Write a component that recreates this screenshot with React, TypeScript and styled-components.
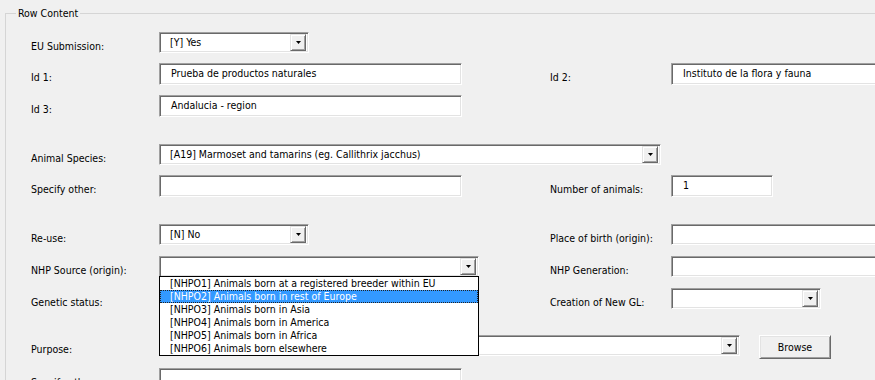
import React from 'react';
import styled, { createGlobalStyle } from 'styled-components';

const GlobalStyle = createGlobalStyle`
  html, body {
    margin: 0;
    padding: 0;
    overflow: hidden;
    background: #f0f0f0;
  }
  body {
    width: 875px;
    height: 380px;
    font-family: "DejaVu Sans Condensed", "Liberation Sans", sans-serif;
    font-size: 10.5px;
    color: #000;
  }
`;

const GroupBox = styled.fieldset`
  margin: 7px 0 0 5px;
  padding: 0;
  width: 960px;
  height: 440px;
  min-width: 0;
  box-sizing: border-box;
  border: 1px solid #d5d5d5;
`;

const Legend = styled.legend`
  margin-left: 10px;
  padding: 0 2px;
  line-height: 13px;
`;

const Form = styled.div`
  padding: 12px 0 0 25px;
`;

const Row = styled.div<{ $height: number }>`
  display: grid;
  grid-template-columns: 128px 391px 121px 1fr;
  align-items: start;
  height: ${({ $height }) => $height}px;
`;

const Label = styled.div`
  padding-top: 8px;
  line-height: 13px;
  white-space: nowrap;
`;

const Cell = styled.div<{ $span?: number }>`
  grid-column: span ${({ $span = 1 }) => $span};
  display: flex;
  align-items: flex-start;
  gap: 19px;

  & > * {
    flex-shrink: 0;
  }
`;

const sunken = `
  box-sizing: border-box;
  background: #fff;
  border-top: 1px solid #a0a0a0;
  border-left: 1px solid #a0a0a0;
  border-right: 1px solid #fff;
  border-bottom: 1px solid #fff;
  box-shadow: inset 1px 1px 0 #696969, inset -1px -1px 0 #e3e3e3;
`;

const TextBox = styled.div<{ $width: number }>`
  ${sunken}
  width: ${({ $width }) => $width}px;
  height: 22px;
  padding: 0 0 0 11px;
  line-height: 19px;
  white-space: nowrap;
  overflow: hidden;
`;

const ComboBox = styled.div<{ $width: number }>`
  ${sunken}
  position: relative;
  display: flex;
  align-items: center;
  width: ${({ $width }) => $width}px;
  height: 21px;
  padding: 2px 2px 2px 10px;
  white-space: nowrap;
`;

const ComboText = styled.span`
  flex: 1;
  line-height: 15px;
  overflow: hidden;
`;

const ArrowButton = styled.div`
  box-sizing: border-box;
  width: 16px;
  height: 17px;
  display: flex;
  align-items: center;
  justify-content: center;
  background: #f0f0f0;
  border-top: 1px solid #e3e3e3;
  border-left: 1px solid #e3e3e3;
  border-right: 1px solid #696969;
  border-bottom: 1px solid #696969;
  box-shadow: inset 1px 1px 0 #fff, inset -1px -1px 0 #a0a0a0;
`;

const DropList = styled.ul`
  position: absolute;
  top: 100%;
  left: -1px;
  z-index: 10;
  box-sizing: border-box;
  width: 320px;
  margin: 0;
  padding: 0;
  list-style: none;
  background: #fff;
  border: 1px solid #000;
`;

const DropItem = styled.li<{ $selected?: boolean }>`
  height: 13px;
  line-height: 13px;
  padding-left: 10px;
  white-space: nowrap;
  color: ${({ $selected }) => ($selected ? '#fff' : '#000')};
  background: ${({ $selected }) => ($selected ? '#3399ff' : 'transparent')};
  outline: ${({ $selected }) => ($selected ? '1px dotted #222' : 'none')};
  outline-offset: -1px;
`;

const Button = styled.button`
  box-sizing: border-box;
  width: 72px;
  height: 24px;
  padding: 0;
  font: inherit;
  color: #000;
  background: #f0f0f0;
  border-top: 1px solid #fff;
  border-left: 1px solid #fff;
  border-right: 1px solid #696969;
  border-bottom: 1px solid #696969;
  box-shadow: inset 1px 1px 0 #e3e3e3, inset -1px -1px 0 #a0a0a0;
`;

const Arrow = () => (
  <svg width="5" height="3" viewBox="0 0 5 3">
    <path d="M0 0h5L2.5 3z" fill="#000" />
  </svg>
);

const Combo = ({ width, value, children }: { width: number; value?: string; children?: React.ReactNode }) => (
  <ComboBox $width={width}>
    <ComboText>{value}</ComboText>
    <ArrowButton>
      <Arrow />
    </ArrowButton>
    {children}
  </ComboBox>
);

const nhpSources = [
  '[NHPO1] Animals born at a registered breeder within EU',
  '[NHPO2] Animals born in rest of Europe',
  '[NHPO3] Animals born in Asia',
  '[NHPO4] Animals born in America',
  '[NHPO5] Animals born in Africa',
  '[NHPO6] Animals born elsewhere',
];

const App = () => (
  <>
    <GlobalStyle />
    <GroupBox>
      <Legend>Row Content</Legend>
      <Form>
        <Row $height={31}>
          <Label>EU Submission:</Label>
          <Cell><Combo width={150} value="[Y] Yes" /></Cell>
        </Row>
        <Row $height={32}>
          <Label>Id 1:</Label>
          <Cell><TextBox $width={303}>Prueba de productos naturales</TextBox></Cell>
          <Label>Id 2:</Label>
          <Cell><TextBox $width={260}>Instituto de la flora y fauna</TextBox></Cell>
        </Row>
        <Row $height={49}>
          <Label>Id 3:</Label>
          <Cell><TextBox $width={303}>Andalucia - region</TextBox></Cell>
        </Row>
        <Row $height={31}>
          <Label>Animal Species:</Label>
          <Cell $span={3}>
            <Combo width={502} value="[A19] Marmoset and tamarins (eg. Callithrix jacchus)" />
          </Cell>
        </Row>
        <Row $height={49}>
          <Label>Specify other:</Label>
          <Cell><TextBox $width={303} /></Cell>
          <Label>Number of animals:</Label>
          <Cell><TextBox $width={102}>1</TextBox></Cell>
        </Row>
        <Row $height={32}>
          <Label>Re-use:</Label>
          <Cell><Combo width={150} value="[N] No" /></Cell>
          <Label>Place of birth (origin):</Label>
          <Cell><Combo width={260} /></Cell>
        </Row>
        <Row $height={32}>
          <Label>NHP Source (origin):</Label>
          <Cell>
            <Combo width={320}>
              <DropList>
                {nhpSources.map((item, index) => (
                  <DropItem key={item} $selected={index === 1}>{item}</DropItem>
                ))}
              </DropList>
            </Combo>
          </Cell>
          <Label>NHP Generation:</Label>
          <Cell><Combo width={260} /></Cell>
        </Row>
        <Row $height={47}>
          <Label>Genetic status:</Label>
          <Cell><Combo width={150} /></Cell>
          <Label>Creation of New GL:</Label>
          <Cell><Combo width={150} /></Cell>
        </Row>
        <Row $height={33}>
          <Label>Purpose:</Label>
          <Cell $span={3}>
            <Combo width={581} />
            <Button>Browse</Button>
          </Cell>
        </Row>
        <Row $height={30}>
          <Label>Specify other:</Label>
          <Cell><TextBox $width={303} /></Cell>
        </Row>
      </Form>
    </GroupBox>
  </>
);

export default App;
